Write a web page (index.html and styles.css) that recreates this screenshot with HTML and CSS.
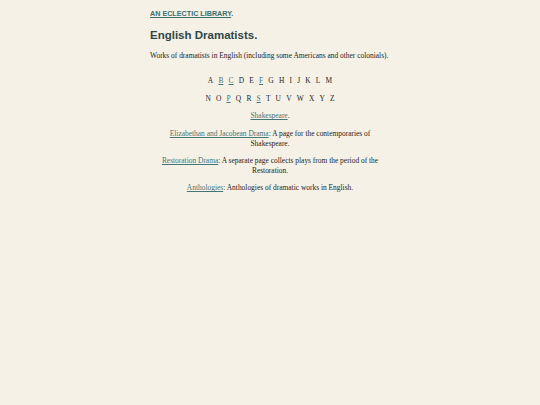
FILE: index.html
```html
<!DOCTYPE html>
<html>
<head>
<meta charset="utf-8">
<link rel="stylesheet" href="styles.css">
</head>
<body>
<div class="page">
  <p class="top"><a href="#">AN ECLECTIC LIBRARY</a>.</p>
  <h1 class="title">English Dramatists.</h1>
  <p class="intro">Works of dramatists in English (including some Americans and other colonials).</p>
  <div class="letters first">
    <span>A</span><a href="#">B</a><a href="#">C</a><span>D</span><span>E</span><a href="#">F</a><span>G</span><span>H</span><span>I</span><span>J</span><span>K</span><span>L</span><span>M</span>
  </div>
  <div class="letters">
    <span>N</span><span>O</span><a href="#">P</a><span>Q</span><span>R</span><a href="#">S</a><span>T</span><span>U</span><span>V</span><span>W</span><span>X</span><span>Y</span><span>Z</span>
  </div>
  <p class="item"><a href="#">Shakespeare</a>.</p>
  <p class="item"><a href="#">Elizabethan and Jacobean Drama</a>: A page for the contemporaries of Shakespeare.</p>
  <p class="item"><a href="#">Restoration Drama</a>: A separate page collects plays from the period of the Restoration.</p>
  <p class="item"><a href="#">Anthologies</a>: Anthologies of dramatic works in English.</p>
</div>
</body>
</html>
```
FILE: styles.css
```css
html, body {
  margin: 0;
  padding: 0;
  background: #f5f1e6;
}
body {
  font-family: "Liberation Serif", "Times New Roman", serif;
  color: #1e1e1e;
}
a {
  color: #467676;
}
.page {
  width: 240px;
  margin: 0 auto;
  padding-top: 9px;
}
.top {
  margin: 0;
  font-family: "Liberation Sans", Arial, sans-serif;
  font-weight: bold;
  font-size: 7.2px;
  line-height: 9px;
  color: #3e6e6e;
}
.top a {
  color: #3e6e6e;
}
.title {
  margin: 10px 0 0;
  font-family: "Liberation Sans", Arial, sans-serif;
  font-weight: bold;
  font-size: 11.5px;
  line-height: 14px;
  color: #2f4646;
}
.intro {
  margin: 9px 0 0;
  font-size: 7.45px;
  line-height: 10px;
}
.letters {
  display: flex;
  justify-content: center;
  gap: 5.2px;
  font-size: 7.45px;
  line-height: 10px;
  margin-top: 8px;
}
.letters.first {
  margin-top: 15px;
}
.item {
  margin: 7.3px 10px 0;
  text-align: center;
  font-size: 7.45px;
  line-height: 10px;
}
```
